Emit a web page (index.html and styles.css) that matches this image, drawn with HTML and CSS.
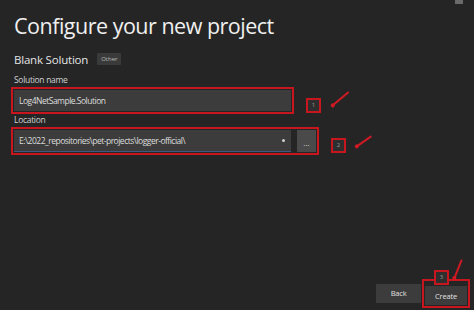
FILE: index.html
```html
<!DOCTYPE html>
<html lang="en">

<head>
    <meta charset="UTF-8">
    <meta name="viewport" content="width=device-width, initial-scale=1.0">
    <title>Configure your new project</title>
    <link rel="stylesheet" href="styles.css">
</head>

<body>

    <div class="dialog">
        <div class="winbtn"></div>

        <h1>Configure your new project</h1>

        <div class="template">
            <span class="tname">Blank Solution</span>
            <span class="tag">Other</span>
        </div>

        <div class="field">
            <div class="labl">Solution name</div>
            <div class="mark-box name-box">
                <div class="inp">Log4NetSample.Solution</div>
            </div>
        </div>

        <div class="field">
            <div class="labl">Location</div>
            <div class="mark-box loc-box">
                <div class="inp combo">
                    <span>E:\2022_repositories\pet-projects\logger-official\</span>
                    <span class="caret"></span>
                </div>
                <div class="browse">...</div>
            </div>
        </div>

        <div class="footer">
            <button class="btn">Back</button>
            <div class="mark-box create-box">
                <button class="btn">Create</button>
            </div>
        </div>

        <!-- numbered annotations -->
        <div class="num n1">1</div>
        <div class="arrow a1"></div>
        <div class="num n2">2</div>
        <div class="arrow a2"></div>
        <div class="num n3">3</div>
        <div class="arrow a3"></div>
    </div>

</body>

</html>
```

FILE: styles.css
```css
body {
    background-color: #252526;
    margin: 0;
    font-family: 'Open Sans', 'Noto Sans', sans-serif;
    color: #e8e8e8;
}

.dialog {
    position: relative;
    width: 474px;
    height: 310px;
    box-sizing: border-box;
    padding: 10px 14px 2px 11px;
    display: flex;
    flex-direction: column;
    overflow: hidden;
}

.winbtn {
    position: absolute;
    top: 0;
    left: 455px;
    width: 8px;
    height: 4px;
    background-color: #6a6a6a;
}

h1 {
    font-size: 21.5px;
    font-weight: 400;
    margin: 0 0 0 3px;
    line-height: 32px;
    color: #f0f0f0;
    letter-spacing: -0.5px;
}

.template {
    display: flex;
    align-items: center;
    gap: 9px;
    margin: 9px 0 6px 3px;
    height: 16px;
}

.tname {
    font-size: 11.5px;
    color: #e4e4e4;
    letter-spacing: -0.2px;
}

.tag {
    font-size: 6px;
    color: #bdbdbd;
    background-color: #3a3a3a;
    padding: 2px 4px;
    border-radius: 1px;
}

.field {
    margin-top: 1px;
}

.field + .field {
    margin-top: 0;
}

.labl {
    font-size: 8.5px;
    line-height: 12px;
    color: #cfcfcf;
    margin: 0 0 1px 3px;
    letter-spacing: -0.3px;
}

.mark-box {
    border: 2px solid #c8161f;
    box-sizing: border-box;
}

.name-box {
    width: 283px;
    height: 27px;
    padding: 1px;
}

.loc-box {
    width: 308px;
    height: 28px;
    padding: 1px;
    display: flex;
    gap: 6px;
}

.inp {
    height: 100%;
    box-sizing: border-box;
    background-color: #3c3c3c;
    font-size: 8.5px;
    letter-spacing: -0.5px;
    color: #dcdcdc;
    padding: 0 5px;
    display: flex;
    align-items: center;
}

.combo {
    flex: 1;
    justify-content: space-between;
    border-bottom: 1px solid #3f5a80;
}

.caret {
    width: 3px;
    height: 3px;
    background-color: #cfcfcf;
    border-radius: 50%;
    margin-right: 1px;
}

.browse {
    width: 19px;
    background-color: #4a4a4a;
    color: #dcdcdc;
    font-size: 8px;
    text-align: center;
    line-height: 26px;
}

.footer {
    margin-top: auto;
    display: flex;
    align-items: center;
    justify-content: flex-end;
    gap: 1px;
    margin-right: -10px;
}

.btn {
    background-color: #3c3c3c;
    color: #e0e0e0;
    border: none;
    font-family: 'Open Sans', 'Noto Sans', sans-serif;
    font-size: 7.5px;
    letter-spacing: -0.2px;
    width: 45px;
    height: 19px;
    padding: 0;
}

.create-box {
    padding: 1px;
}

.create-box .btn {
    width: 42px;
}

.num {
    position: absolute;
    width: 11px;
    height: 11px;
    border: 2px solid #c8161f;
    background-color: #2e2e2e;
    color: #9a9a9a;
    font-size: 6px;
    line-height: 11px;
    text-align: center;
}

.n1 {
    left: 306px;
    top: 98px;
}

.n2 {
    left: 331px;
    top: 138px;
}

.n3 {
    left: 434px;
    top: 270px;
}

.arrow {
    position: absolute;
    height: 2px;
    background-color: #d01a23;
    border-radius: 1px;
    transform-origin: left center;
}

.arrow::before {
    content: "";
    position: absolute;
    left: -1px;
    top: -1px;
    width: 4px;
    height: 4px;
    border-radius: 50%;
    background-color: #d01a23;
}

.a1 {
    left: 332px;
    top: 105px;
    width: 22px;
    transform: rotate(-40deg);
}

.a2 {
    left: 356px;
    top: 146px;
    width: 19px;
    transform: rotate(-35deg);
}

.a3 {
    left: 454px;
    top: 278px;
    width: 21px;
    transform: rotate(-68deg);
}
```
